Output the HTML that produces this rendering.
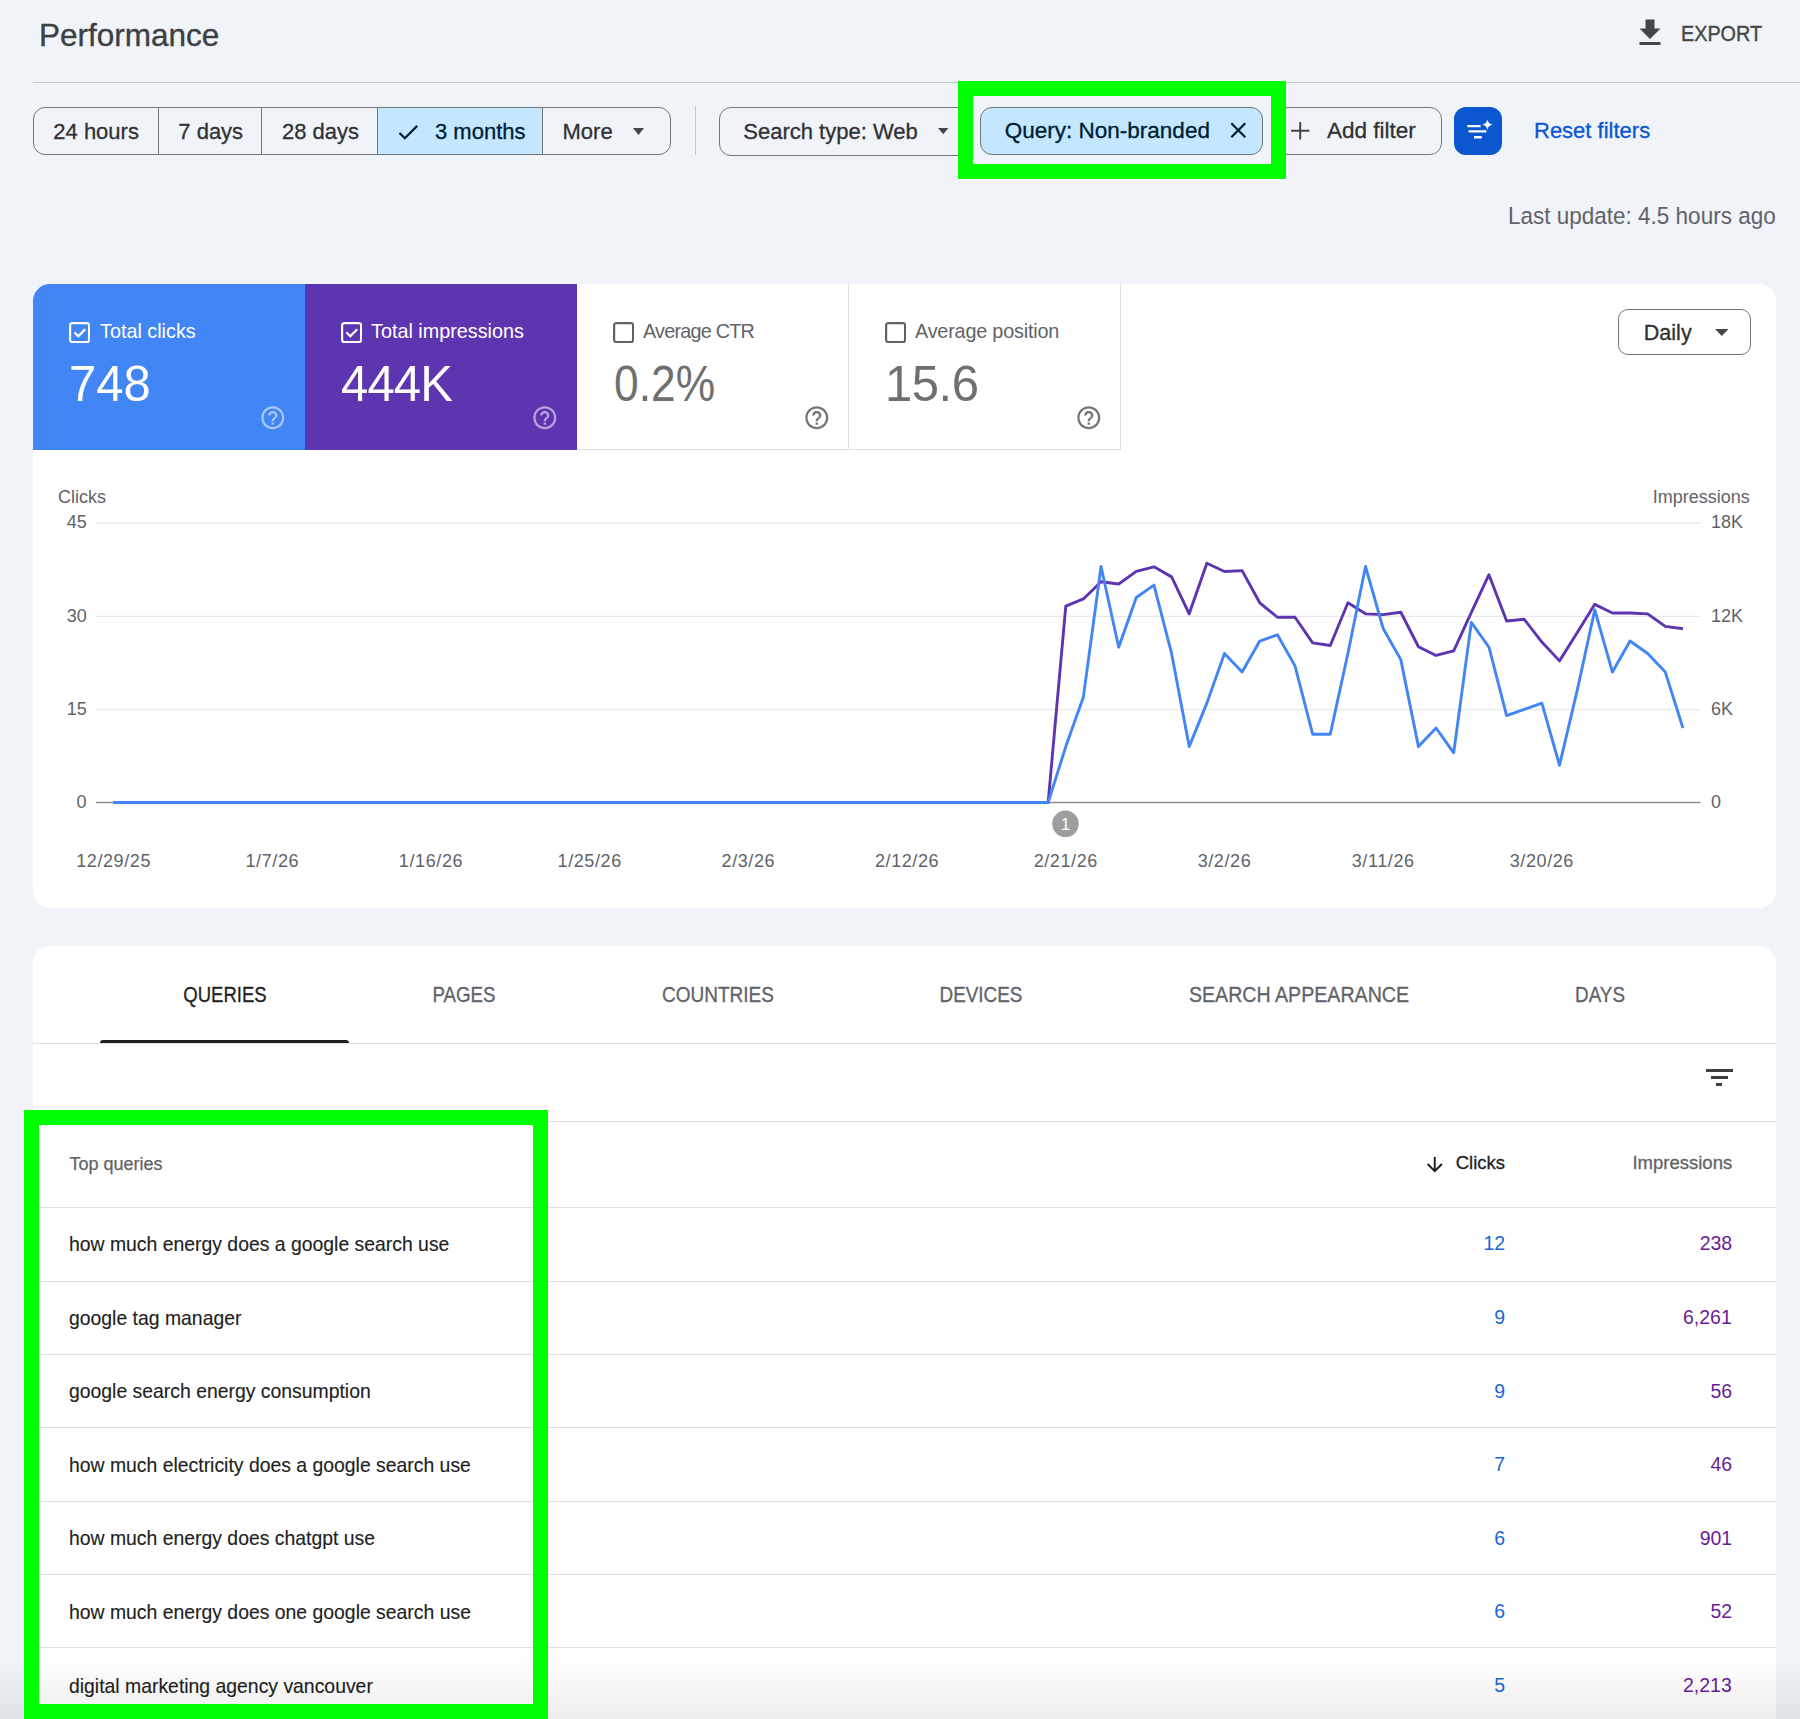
<!DOCTYPE html>
<html><head><meta charset="utf-8"><title>Performance</title>
<style>
html,body{margin:0;padding:0;width:1800px;height:1719px;overflow:hidden;background:#f0f4f9;position:relative;font-family:"Liberation Sans",sans-serif}
.t{position:absolute;line-height:1;white-space:nowrap}
svg{display:block}
</style></head><body>
<div class="t" style="left:39.00px;top:20.33px;font-size:31.5px;color:#3c4043;-webkit-text-stroke:0.35px #3c4043;">Performance</div>
<svg style="position:absolute;left:1631.5px;top:14.9px" width="36" height="36" viewBox="0 0 24 24"><path fill="#444746" d="M19 9h-4V3H9v6H5l7 7 7-7zM5 18v2h14v-2H5z"/></svg>
<div class="t" style="left:1680.60px;top:23.50px;font-size:21.5px;color:#444746;-webkit-text-stroke:0.4px #444746;transform:scaleX(0.9200);transform-origin:0 0;">EXPORT</div>
<div style="position:absolute;left:33.00px;top:82.00px;width:1767.00px;height:1.00px;background:#c4c7c5"></div>
<div style="position:absolute;left:33.00px;top:107.20px;width:637.50px;height:48.20px;box-sizing:border-box;border:1px solid #747775;border-radius:12px;overflow:hidden"></div>
<div style="position:absolute;left:377.00px;top:108.20px;width:165.50px;height:46.20px;background:#c2e7ff"></div>
<div style="position:absolute;left:157.80px;top:107.00px;width:1.00px;height:48.00px;background:#747775"></div>
<div style="position:absolute;left:261.00px;top:107.00px;width:1.00px;height:48.00px;background:#747775"></div>
<div style="position:absolute;left:376.50px;top:107.00px;width:1.00px;height:48.00px;background:#747775"></div>
<div style="position:absolute;left:542.00px;top:107.00px;width:1.00px;height:48.00px;background:#747775"></div>
<div class="t" style="left:53.30px;top:120.57px;font-size:22px;color:#303134;-webkit-text-stroke:0.3px #303134;">24 hours</div>
<div class="t" style="left:178.30px;top:120.57px;font-size:22px;color:#303134;-webkit-text-stroke:0.3px #303134;">7 days</div>
<div class="t" style="left:282.00px;top:120.57px;font-size:22px;color:#303134;-webkit-text-stroke:0.3px #303134;">28 days</div>
<svg style="position:absolute;left:395px;top:119.2px" width="26.25" height="26.25" viewBox="0 0 24 24"><path fill="#001d35" d="M9 16.17L4.83 12l-1.42 1.41L9 19 21 7l-1.41-1.41z"/></svg>
<div class="t" style="left:435.00px;top:120.57px;font-size:22px;color:#001d35;-webkit-text-stroke:0.3px #001d35;">3 months</div>
<div class="t" style="left:562.50px;top:120.57px;font-size:22px;color:#303134;-webkit-text-stroke:0.3px #303134;">More</div>
<svg style="position:absolute;left:632.5px;top:127.5px" width="11.0" height="7.0" viewBox="0 0 10 7" preserveAspectRatio="none"><path fill="#444746" d="M0 0h10L5 7z"/></svg>
<div style="position:absolute;left:695.00px;top:106.00px;width:1.00px;height:49.00px;background:#c4c7c5"></div>
<div style="position:absolute;left:718.80px;top:107.00px;width:250.00px;height:48.50px;box-sizing:border-box;border:1px solid #747775;border-radius:12px"></div>
<div class="t" style="left:743.30px;top:120.57px;font-size:22px;color:#303134;-webkit-text-stroke:0.3px #303134;">Search type: Web</div>
<svg style="position:absolute;left:938px;top:128.3px" width="10.5" height="6.199999999999989" viewBox="0 0 10 7" preserveAspectRatio="none"><path fill="#444746" d="M0 0h10L5 7z"/></svg>
<div style="position:absolute;left:1276.00px;top:107.00px;width:166.00px;height:48.00px;box-sizing:border-box;border:1px solid #747775;border-radius:12px"></div>
<svg style="position:absolute;left:1290px;top:121px" width="21" height="20" viewBox="0 0 21 20"><path stroke="#444746" stroke-width="2" d="M1 9.7h18.3M10.2 1v17.4"/></svg>
<div class="t" style="left:1327.00px;top:120.15px;font-size:22.5px;color:#303134;-webkit-text-stroke:0.3px #303134;">Add filter</div>
<div style="position:absolute;left:980.00px;top:107.00px;width:283.40px;height:47.70px;box-sizing:border-box;background:#c2e7ff;border:1px solid #747775;border-radius:12px"></div>
<div class="t" style="left:1004.80px;top:120.15px;font-size:22.5px;color:#001d35;-webkit-text-stroke:0.3px #001d35;">Query: Non-branded</div>
<svg style="position:absolute;left:1224.5px;top:117.1px" width="26.6" height="26.6" viewBox="0 0 24 24"><path fill="#001d35" d="M19 6.41L17.59 5 12 10.59 6.41 5 5 6.41 10.59 12 5 17.59 6.41 19 12 13.41 17.59 19 19 17.59 13.41 12z"/></svg>
<div style="position:absolute;left:958.20px;top:81.00px;width:328.00px;height:98.00px;box-sizing:border-box;border:15px solid #00ff00"></div>
<div style="position:absolute;left:1454.40px;top:106.60px;width:48.00px;height:48.00px;background:#0b57d0;border-radius:12px"></div>
<svg style="position:absolute;left:1454.4px;top:106.6px" width="48" height="48" viewBox="0 0 48 48"><path stroke="#fff" stroke-width="2.4" d="M13.4 19.1h13.2M14.6 24.4h17.7M20 30.2h7.8"/><path fill="#fff" d="M33.4 12.2 C34.2 15.6 35.4 16.8 38.8 17.6 C35.4 18.4 34.2 19.6 33.4 23 C32.6 19.6 31.4 18.4 28 17.6 C31.4 16.8 32.6 15.6 33.4 12.2Z"/></svg>
<div class="t" style="left:1534.00px;top:119.67px;font-size:22px;color:#0b57d0;-webkit-text-stroke:0.3px #0b57d0;">Reset filters</div>
<div class="t" style="left:1508.00px;top:203.63px;font-size:24.3px;color:#5f6368;transform:scaleX(0.9259);transform-origin:0 0;">Last update: 4.5 hours ago</div>
<div style="position:absolute;left:33.00px;top:284.00px;width:1742.60px;height:624.30px;background:#fff;border-radius:17px"></div>
<div style="position:absolute;left:33.00px;top:284.00px;width:272.00px;height:166.00px;background:#4285f4;border-top-left-radius:17px"></div>
<div style="position:absolute;left:305.00px;top:284.00px;width:272.00px;height:166.00px;background:#5e35b1"></div>
<div style="position:absolute;left:577.00px;top:449.00px;width:544.00px;height:1.00px;background:#e0e0e0"></div>
<div style="position:absolute;left:848.00px;top:284.00px;width:1.00px;height:166.00px;background:#e0e0e0"></div>
<div style="position:absolute;left:1120.00px;top:284.00px;width:1.00px;height:166.00px;background:#e0e0e0"></div>
<svg style="position:absolute;left:68.8px;top:322.2px" width="21.2" height="21.2" viewBox="0 0 21.2 21.2"><rect x="1.1" y="1.1" width="19" height="19" rx="2.2" fill="none" stroke="#fff" stroke-width="2.2"/><path fill="none" stroke="#fff" stroke-width="2.3" d="M5.4 10.3l3.9 3.9 6.9-7"/></svg>
<div class="t" style="left:99.70px;top:320.56px;font-size:20.6px;color:#fff;transform:scaleX(0.9612);transform-origin:0 0;">Total clicks</div>
<div class="t" style="left:68.60px;top:358.94px;font-size:50.5px;color:#fff;transform:scaleX(0.9703);transform-origin:0 0;">748</div>
<svg style="position:absolute;left:259.00px;top:404.20px" width="27.6" height="27.6" viewBox="0 0 24 24"><path fill="rgba(255,255,255,0.55)" d="M11 18h2v-2h-2v2zm1-16C6.48 2 2 6.48 2 12s4.48 10 10 10 10-4.48 10-10S17.52 2 12 2zm0 18c-4.41 0-8-3.59-8-8s3.59-8 8-8 8 3.59 8 8-3.59 8-8 8zm0-14c-2.21 0-4 1.79-4 4h2c0-1.1.9-2 2-2s2 .9 2 2c0 2-3 1.75-3 5h2c0-2.25 3-2.5 3-5 0-2.21-1.79-4-4-4z"/></svg>
<svg style="position:absolute;left:340.8px;top:322.2px" width="21.2" height="21.2" viewBox="0 0 21.2 21.2"><rect x="1.1" y="1.1" width="19" height="19" rx="2.2" fill="none" stroke="#fff" stroke-width="2.2"/><path fill="none" stroke="#fff" stroke-width="2.3" d="M5.4 10.3l3.9 3.9 6.9-7"/></svg>
<div class="t" style="left:371.30px;top:320.56px;font-size:20.6px;color:#fff;transform:scaleX(0.9612);transform-origin:0 0;">Total impressions</div>
<div class="t" style="left:341.00px;top:358.94px;font-size:50.5px;color:#fff;letter-spacing:-0.9px;transform:scaleX(0.9703);transform-origin:0 0;">444K</div>
<svg style="position:absolute;left:531.00px;top:404.20px" width="27.6" height="27.6" viewBox="0 0 24 24"><path fill="rgba(255,255,255,0.55)" d="M11 18h2v-2h-2v2zm1-16C6.48 2 2 6.48 2 12s4.48 10 10 10 10-4.48 10-10S17.52 2 12 2zm0 18c-4.41 0-8-3.59-8-8s3.59-8 8-8 8 3.59 8 8-3.59 8-8 8zm0-14c-2.21 0-4 1.79-4 4h2c0-1.1.9-2 2-2s2 .9 2 2c0 2-3 1.75-3 5h2c0-2.25 3-2.5 3-5 0-2.21-1.79-4-4-4z"/></svg>
<svg style="position:absolute;left:613.3px;top:322.2px" width="21.2" height="21.2" viewBox="0 0 21.2 21.2"><rect x="1.1" y="1.1" width="19" height="19" rx="2.2" fill="none" stroke="#5f6368" stroke-width="2.2"/></svg>
<div class="t" style="left:643.30px;top:320.56px;font-size:20.6px;color:#5f6368;letter-spacing:-0.8px;transform:scaleX(0.9612);transform-origin:0 0;">Average CTR</div>
<div class="t" style="left:613.60px;top:358.94px;font-size:50.5px;color:#6f6f6f;transform:scaleX(0.8781);transform-origin:0 0;">0.2%</div>
<svg style="position:absolute;left:803.10px;top:404.20px" width="27.6" height="27.6" viewBox="0 0 24 24"><path fill="#757575" d="M11 18h2v-2h-2v2zm1-16C6.48 2 2 6.48 2 12s4.48 10 10 10 10-4.48 10-10S17.52 2 12 2zm0 18c-4.41 0-8-3.59-8-8s3.59-8 8-8 8 3.59 8 8-3.59 8-8 8zm0-14c-2.21 0-4 1.79-4 4h2c0-1.1.9-2 2-2s2 .9 2 2c0 2-3 1.75-3 5h2c0-2.25 3-2.5 3-5 0-2.21-1.79-4-4-4z"/></svg>
<svg style="position:absolute;left:885.3px;top:322.2px" width="21.2" height="21.2" viewBox="0 0 21.2 21.2"><rect x="1.1" y="1.1" width="19" height="19" rx="2.2" fill="none" stroke="#5f6368" stroke-width="2.2"/></svg>
<div class="t" style="left:915.30px;top:320.56px;font-size:20.6px;color:#5f6368;letter-spacing:-0.2px;transform:scaleX(0.9612);transform-origin:0 0;">Average position</div>
<div class="t" style="left:884.80px;top:358.94px;font-size:50.5px;color:#6f6f6f;letter-spacing:-0.5px;transform:scaleX(0.9703);transform-origin:0 0;">15.6</div>
<svg style="position:absolute;left:1075.10px;top:404.20px" width="27.6" height="27.6" viewBox="0 0 24 24"><path fill="#757575" d="M11 18h2v-2h-2v2zm1-16C6.48 2 2 6.48 2 12s4.48 10 10 10 10-4.48 10-10S17.52 2 12 2zm0 18c-4.41 0-8-3.59-8-8s3.59-8 8-8 8 3.59 8 8-3.59 8-8 8zm0-14c-2.21 0-4 1.79-4 4h2c0-1.1.9-2 2-2s2 .9 2 2c0 2-3 1.75-3 5h2c0-2.25 3-2.5 3-5 0-2.21-1.79-4-4-4z"/></svg>
<div style="position:absolute;left:1618.00px;top:308.60px;width:132.50px;height:46.70px;box-sizing:border-box;border:1px solid #747775;border-radius:10px"></div>
<div class="t" style="left:1643.70px;top:322.21px;font-size:21.6px;color:#303134;-webkit-text-stroke:0.3px #303134;">Daily</div>
<svg style="position:absolute;left:1714.5px;top:328.5px" width="13.5" height="7.0" viewBox="0 0 10 7" preserveAspectRatio="none"><path fill="#444746" d="M0 0h10L5 7z"/></svg>
<div class="t" style="left:57.80px;top:487.60px;font-size:18.9px;color:#5f6368;transform:scaleX(0.9524);transform-origin:0 0;">Clicks</div>
<div class="t" style="right:50.00px;top:487.60px;font-size:18.9px;color:#5f6368;transform:scaleX(0.9524);transform-origin:100% 0;">Impressions</div>
<div class="t" style="right:1713.60px;top:513.32px;font-size:18.75px;color:#5f6368;transform:scaleX(0.9600);transform-origin:100% 0;">45</div>
<div class="t" style="left:1710.90px;top:513.32px;font-size:18.75px;color:#5f6368;transform:scaleX(0.9600);transform-origin:0 0;">18K</div>
<div class="t" style="right:1713.60px;top:606.62px;font-size:18.75px;color:#5f6368;transform:scaleX(0.9600);transform-origin:100% 0;">30</div>
<div class="t" style="left:1710.90px;top:606.62px;font-size:18.75px;color:#5f6368;transform:scaleX(0.9600);transform-origin:0 0;">12K</div>
<div class="t" style="right:1713.60px;top:699.92px;font-size:18.75px;color:#5f6368;transform:scaleX(0.9600);transform-origin:100% 0;">15</div>
<div class="t" style="left:1710.90px;top:699.92px;font-size:18.75px;color:#5f6368;transform:scaleX(0.9600);transform-origin:0 0;">6K</div>
<div class="t" style="right:1713.60px;top:792.82px;font-size:18.75px;color:#5f6368;transform:scaleX(0.9600);transform-origin:100% 0;">0</div>
<div class="t" style="left:1710.90px;top:792.82px;font-size:18.75px;color:#5f6368;transform:scaleX(0.9600);transform-origin:0 0;">0</div>
<svg style="position:absolute;left:0;top:0" width="1800" height="908" viewBox="0 0 1800 908"><path stroke="#e8e8e8" stroke-width="1.3" d="M96 523H1700.6"/><path stroke="#e8e8e8" stroke-width="1.3" d="M96 616.3H1700.6"/><path stroke="#e8e8e8" stroke-width="1.3" d="M96 709.6H1700.6"/><path stroke="#8e8e8e" stroke-width="1.6" d="M96 802.5H1700.6"/><polyline fill="none" stroke="#5e35b1" stroke-width="2.9" stroke-linejoin="round" points="113.60,802.50 131.23,802.50 148.87,802.50 166.50,802.50 184.13,802.50 201.76,802.50 219.40,802.50 237.03,802.50 254.66,802.50 272.30,802.50 289.93,802.50 307.56,802.50 325.20,802.50 342.83,802.50 360.46,802.50 378.10,802.50 395.73,802.50 413.36,802.50 430.99,802.50 448.63,802.50 466.26,802.50 483.89,802.50 501.53,802.50 519.16,802.50 536.79,802.50 554.42,802.50 572.06,802.50 589.69,802.50 607.32,802.50 624.96,802.50 642.59,802.50 660.22,802.50 677.86,802.50 695.49,802.50 713.12,802.50 730.75,802.50 748.39,802.50 766.02,802.50 783.65,802.50 801.29,802.50 818.92,802.50 836.55,802.50 854.19,802.50 871.82,802.50 889.45,802.50 907.09,802.50 924.72,802.50 942.35,802.50 959.98,802.50 977.62,802.50 995.25,802.50 1012.88,802.50 1030.52,802.50 1048.15,802.50 1065.78,606.07 1083.41,598.93 1101.05,581.69 1118.68,584.02 1136.31,571.44 1153.95,566.78 1171.58,576.88 1189.21,613.83 1206.85,563.21 1224.48,571.44 1242.11,570.67 1259.74,602.81 1277.38,617.25 1295.01,617.25 1312.64,642.87 1330.28,645.51 1347.91,602.81 1365.54,613.83 1383.18,614.61 1400.81,612.28 1418.44,646.75 1436.07,655.45 1453.71,650.79 1471.34,612.28 1488.97,574.70 1506.61,620.98 1524.24,619.27 1541.87,642.10 1559.51,660.88 1577.14,632.78 1594.77,604.36 1612.40,613.06 1630.04,613.06 1647.67,613.83 1665.30,626.41 1682.94,628.74"/><polyline fill="none" stroke="#4285f4" stroke-width="2.9" stroke-linejoin="round" points="113.60,802.50 131.23,802.50 148.87,802.50 166.50,802.50 184.13,802.50 201.76,802.50 219.40,802.50 237.03,802.50 254.66,802.50 272.30,802.50 289.93,802.50 307.56,802.50 325.20,802.50 342.83,802.50 360.46,802.50 378.10,802.50 395.73,802.50 413.36,802.50 430.99,802.50 448.63,802.50 466.26,802.50 483.89,802.50 501.53,802.50 519.16,802.50 536.79,802.50 554.42,802.50 572.06,802.50 589.69,802.50 607.32,802.50 624.96,802.50 642.59,802.50 660.22,802.50 677.86,802.50 695.49,802.50 713.12,802.50 730.75,802.50 748.39,802.50 766.02,802.50 783.65,802.50 801.29,802.50 818.92,802.50 836.55,802.50 854.19,802.50 871.82,802.50 889.45,802.50 907.09,802.50 924.72,802.50 942.35,802.50 959.98,802.50 977.62,802.50 995.25,802.50 1012.88,802.50 1030.52,802.50 1048.15,802.50 1065.78,746.60 1083.41,696.91 1101.05,566.48 1118.68,647.23 1136.31,597.54 1153.95,585.12 1171.58,653.44 1189.21,746.60 1206.85,703.12 1224.48,653.44 1242.11,672.07 1259.74,641.01 1277.38,634.80 1295.01,665.86 1312.64,734.18 1330.28,734.18 1347.91,653.44 1365.54,566.48 1383.18,628.59 1400.81,659.65 1418.44,746.60 1436.07,727.97 1453.71,752.81 1471.34,622.38 1488.97,647.23 1506.61,715.55 1524.24,709.34 1541.87,703.12 1559.51,765.23 1577.14,690.70 1594.77,609.96 1612.40,672.07 1630.04,641.01 1647.67,653.44 1665.30,672.07 1682.94,727.97"/><circle cx="1065.5" cy="823.8" r="13.3" fill="#9e9e9e"/></svg>
<div class="t" style="left:865.50px;width:400px;text-align:center;top:816.11px;font-size:17px;color:#fff;">1</div>
<div class="t" style="left:-86.40px;width:400px;text-align:center;top:851.76px;font-size:18px;color:#5f6368;letter-spacing:0.6px;">12/29/25</div>
<div class="t" style="left:72.30px;width:400px;text-align:center;top:851.76px;font-size:18px;color:#5f6368;letter-spacing:0.6px;">1/7/26</div>
<div class="t" style="left:230.99px;width:400px;text-align:center;top:851.76px;font-size:18px;color:#5f6368;letter-spacing:0.6px;">1/16/26</div>
<div class="t" style="left:389.69px;width:400px;text-align:center;top:851.76px;font-size:18px;color:#5f6368;letter-spacing:0.6px;">1/25/26</div>
<div class="t" style="left:548.39px;width:400px;text-align:center;top:851.76px;font-size:18px;color:#5f6368;letter-spacing:0.6px;">2/3/26</div>
<div class="t" style="left:707.09px;width:400px;text-align:center;top:851.76px;font-size:18px;color:#5f6368;letter-spacing:0.6px;">2/12/26</div>
<div class="t" style="left:865.78px;width:400px;text-align:center;top:851.76px;font-size:18px;color:#5f6368;letter-spacing:0.6px;">2/21/26</div>
<div class="t" style="left:1024.48px;width:400px;text-align:center;top:851.76px;font-size:18px;color:#5f6368;letter-spacing:0.6px;">3/2/26</div>
<div class="t" style="left:1183.18px;width:400px;text-align:center;top:851.76px;font-size:18px;color:#5f6368;letter-spacing:0.6px;">3/11/26</div>
<div class="t" style="left:1341.87px;width:400px;text-align:center;top:851.76px;font-size:18px;color:#5f6368;letter-spacing:0.6px;">3/20/26</div>
<div style="position:absolute;left:33.00px;top:946.00px;width:1742.60px;height:800.00px;background:#fff;border-top-left-radius:17px;border-top-right-radius:17px"></div>
<div class="t" style="left:24.50px;width:400px;text-align:center;top:984.60px;font-size:21.5px;color:#1f1f1f;transform:scaleX(0.861);transform-origin:50% 0;-webkit-text-stroke:0.3px #1f1f1f;">QUERIES</div>
<div class="t" style="left:263.50px;width:400px;text-align:center;top:984.60px;font-size:21.5px;color:#5f6368;transform:scaleX(0.871);transform-origin:50% 0;-webkit-text-stroke:0.3px #5f6368;">PAGES</div>
<div class="t" style="left:517.50px;width:400px;text-align:center;top:984.60px;font-size:21.5px;color:#5f6368;transform:scaleX(0.884);transform-origin:50% 0;-webkit-text-stroke:0.3px #5f6368;">COUNTRIES</div>
<div class="t" style="left:781.20px;width:400px;text-align:center;top:984.60px;font-size:21.5px;color:#5f6368;transform:scaleX(0.877);transform-origin:50% 0;-webkit-text-stroke:0.3px #5f6368;">DEVICES</div>
<div class="t" style="left:1098.70px;width:400px;text-align:center;top:984.60px;font-size:21.5px;color:#5f6368;transform:scaleX(0.912);transform-origin:50% 0;-webkit-text-stroke:0.3px #5f6368;">SEARCH APPEARANCE</div>
<div class="t" style="left:1399.70px;width:400px;text-align:center;top:984.60px;font-size:21.5px;color:#5f6368;transform:scaleX(0.876);transform-origin:50% 0;-webkit-text-stroke:0.3px #5f6368;">DAYS</div>
<div style="position:absolute;left:33.00px;top:1043.00px;width:1742.60px;height:1.00px;background:#e0e0e0"></div>
<div style="position:absolute;left:100.00px;top:1039.50px;width:249.20px;height:3.50px;background:#1f1f1f;border-radius:3px 3px 0 0"></div>
<div style="position:absolute;left:1705.60px;top:1068.60px;width:27.30px;height:3.00px;background:#3c4043"></div>
<div style="position:absolute;left:1710.70px;top:1075.70px;width:17.70px;height:3.00px;background:#3c4043"></div>
<div style="position:absolute;left:1716.00px;top:1083.00px;width:6.20px;height:3.00px;background:#3c4043"></div>
<div style="position:absolute;left:33.00px;top:1121.30px;width:1742.60px;height:1.00px;background:#e0e0e0"></div>
<div class="t" style="left:69.40px;top:1154.56px;font-size:18px;color:#5f6368;-webkit-text-stroke:0.25px #5f6368;">Top queries</div>
<svg style="position:absolute;left:1423px;top:1152.8px" width="23.5" height="23.5" viewBox="0 0 24 24"><path fill="#1f1f1f" d="M20 12l-1.41-1.41L13 16.17V4h-2v12.17l-5.58-5.59L4 12l8 8 8-8z"/></svg>
<div class="t" style="right:295.00px;top:1154.34px;font-size:18.5px;color:#1f1f1f;-webkit-text-stroke:0.3px #1f1f1f;">Clicks</div>
<div class="t" style="right:67.80px;top:1154.34px;font-size:18.5px;color:#5f6368;-webkit-text-stroke:0.3px #5f6368;">Impressions</div>
<div style="position:absolute;left:33.00px;top:1207.30px;width:1742.60px;height:1.00px;background:#e0e0e0"></div>
<div class="t" style="left:69.40px;top:1234.01px;font-size:20.3px;color:#1f1f1f;-webkit-text-stroke:0.15px #1f1f1f;transform:scaleX(0.9557);transform-origin:0 0;">how much energy does a google search use</div>
<div class="t" style="right:295.00px;top:1234.35px;font-size:19.9px;color:#1967d2;transform:scaleX(0.9799);transform-origin:100% 0;">12</div>
<div class="t" style="right:67.80px;top:1234.35px;font-size:19.9px;color:#6a1b9a;transform:scaleX(0.9799);transform-origin:100% 0;">238</div>
<div style="position:absolute;left:33.00px;top:1280.65px;width:1742.60px;height:1.00px;background:#e0e0e0"></div>
<div class="t" style="left:69.40px;top:1307.61px;font-size:20.3px;color:#1f1f1f;-webkit-text-stroke:0.15px #1f1f1f;transform:scaleX(0.9557);transform-origin:0 0;">google tag manager</div>
<div class="t" style="right:295.00px;top:1307.95px;font-size:19.9px;color:#1967d2;transform:scaleX(0.9799);transform-origin:100% 0;">9</div>
<div class="t" style="right:67.80px;top:1307.95px;font-size:19.9px;color:#6a1b9a;transform:scaleX(0.9799);transform-origin:100% 0;">6,261</div>
<div style="position:absolute;left:33.00px;top:1354.00px;width:1742.60px;height:1.00px;background:#e0e0e0"></div>
<div class="t" style="left:69.40px;top:1381.21px;font-size:20.3px;color:#1f1f1f;-webkit-text-stroke:0.15px #1f1f1f;transform:scaleX(0.9557);transform-origin:0 0;">google search energy consumption</div>
<div class="t" style="right:295.00px;top:1381.55px;font-size:19.9px;color:#1967d2;transform:scaleX(0.9799);transform-origin:100% 0;">9</div>
<div class="t" style="right:67.80px;top:1381.55px;font-size:19.9px;color:#6a1b9a;transform:scaleX(0.9799);transform-origin:100% 0;">56</div>
<div style="position:absolute;left:33.00px;top:1427.35px;width:1742.60px;height:1.00px;background:#e0e0e0"></div>
<div class="t" style="left:69.40px;top:1454.81px;font-size:20.3px;color:#1f1f1f;-webkit-text-stroke:0.15px #1f1f1f;transform:scaleX(0.9557);transform-origin:0 0;">how much electricity does a google search use</div>
<div class="t" style="right:295.00px;top:1455.15px;font-size:19.9px;color:#1967d2;transform:scaleX(0.9799);transform-origin:100% 0;">7</div>
<div class="t" style="right:67.80px;top:1455.15px;font-size:19.9px;color:#6a1b9a;transform:scaleX(0.9799);transform-origin:100% 0;">46</div>
<div style="position:absolute;left:33.00px;top:1500.70px;width:1742.60px;height:1.00px;background:#e0e0e0"></div>
<div class="t" style="left:69.40px;top:1528.41px;font-size:20.3px;color:#1f1f1f;-webkit-text-stroke:0.15px #1f1f1f;transform:scaleX(0.9557);transform-origin:0 0;">how much energy does chatgpt use</div>
<div class="t" style="right:295.00px;top:1528.75px;font-size:19.9px;color:#1967d2;transform:scaleX(0.9799);transform-origin:100% 0;">6</div>
<div class="t" style="right:67.80px;top:1528.75px;font-size:19.9px;color:#6a1b9a;transform:scaleX(0.9799);transform-origin:100% 0;">901</div>
<div style="position:absolute;left:33.00px;top:1574.05px;width:1742.60px;height:1.00px;background:#e0e0e0"></div>
<div class="t" style="left:69.40px;top:1602.01px;font-size:20.3px;color:#1f1f1f;-webkit-text-stroke:0.15px #1f1f1f;transform:scaleX(0.9557);transform-origin:0 0;">how much energy does one google search use</div>
<div class="t" style="right:295.00px;top:1602.35px;font-size:19.9px;color:#1967d2;transform:scaleX(0.9799);transform-origin:100% 0;">6</div>
<div class="t" style="right:67.80px;top:1602.35px;font-size:19.9px;color:#6a1b9a;transform:scaleX(0.9799);transform-origin:100% 0;">52</div>
<div style="position:absolute;left:33.00px;top:1647.40px;width:1742.60px;height:1.00px;background:#e0e0e0"></div>
<div class="t" style="left:69.40px;top:1675.61px;font-size:20.3px;color:#1f1f1f;-webkit-text-stroke:0.15px #1f1f1f;transform:scaleX(0.9557);transform-origin:0 0;">digital marketing agency vancouver</div>
<div class="t" style="right:295.00px;top:1675.95px;font-size:19.9px;color:#1967d2;transform:scaleX(0.9799);transform-origin:100% 0;">5</div>
<div class="t" style="right:67.80px;top:1675.95px;font-size:19.9px;color:#6a1b9a;transform:scaleX(0.9799);transform-origin:100% 0;">2,213</div>
<div style="position:absolute;left:0.00px;top:1652.00px;width:1800.00px;height:67.00px;background:linear-gradient(to bottom, rgba(0,0,0,0), rgba(0,0,0,0.015) 30%, rgba(0,0,0,0.075))"></div>
<div style="position:absolute;left:24.20px;top:1110.00px;width:523.60px;height:609.00px;box-sizing:border-box;border:15px solid #00ff00"></div>
</body></html>
